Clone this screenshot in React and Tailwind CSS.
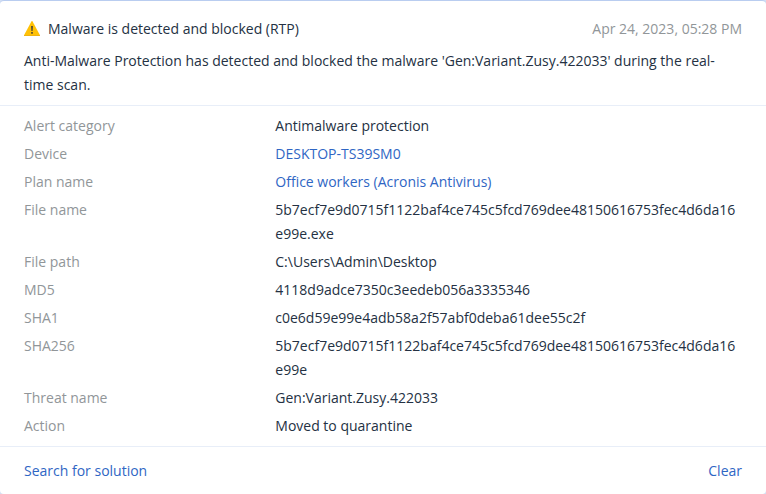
import clsx from 'clsx';

const details = [
    { label: 'Alert category', value: 'Antimalware protection' },
    { label: 'Device', value: 'DESKTOP-TS39SM0', href: '#device' },
    { label: 'Plan name', value: 'Office workers (Acronis Antivirus)', href: '#plan' },
    { label: 'File name', value: '5b7ecf7e9d0715f1122baf4ce745c5fcd769dee48150616753fec4d6da16e99e.exe', hash: true },
    { label: 'File path', value: 'C:\\Users\\Admin\\Desktop' },
    { label: 'MD5', value: '4118d9adce7350c3eedeb056a3335346', hash: true },
    { label: 'SHA1', value: 'c0e6d59e99e4adb58a2f57abf0deba61dee55c2f', hash: true },
    { label: 'SHA256', value: '5b7ecf7e9d0715f1122baf4ce745c5fcd769dee48150616753fec4d6da16e99e', hash: true },
    { label: 'Threat name', value: 'Gen:Variant.Zusy.422033' },
    { label: 'Action', value: 'Moved to quarantine' },
];

function WarningIcon() {
    return (
        <svg viewBox="0 0 16 16" className="size-4 shrink-0" aria-hidden="true">
            <path d="M7.4.4Q8-.3 8.6.4L16 14.2V15H0v-.8Z" fill="#ffc107" />
            <path d="M0 14h16v1H0Z" fill="#efb310" />
            <path d="M7.1 5h1.8l-.3 5H7.4zM7.2 11h1.6v1.8H7.2z" fill="#4a4436" />
        </svg>
    );
}

export default function App() {
    return (
        <div className="bg-[#d3dff3]">
            <article className="rounded-[4px] border-t border-[#b9cdf0] bg-white font-['Open_Sans',sans-serif] text-sm leading-6 text-[#243143]">
                <header className="px-6 pt-4 pb-2">
                    <div className="flex items-center gap-2">
                        <WarningIcon />
                        <h1>Malware is detected and blocked (RTP)</h1>
                        <time dateTime="2023-04-24T17:28" className="ml-auto text-[#919699]">
                            Apr 24, 2023, 05:28 PM
                        </time>
                    </div>
                    <p className="mt-2">
                        Anti-Malware Protection has detected and blocked the malware
                        'Gen:Variant.Zusy.422033' during the real-time scan.
                    </p>
                </header>

                <div className="border-y border-[#e8eef8] px-6 py-1.5">
                    <table className="w-full table-fixed">
                        <tbody>
                            {details.map(({ label, value, href, hash }) => (
                                <tr key={label}>
                                    <th scope="row" className="w-[35%] py-0.5 text-left align-top font-normal text-[#919699]">
                                        {label}
                                    </th>
                                    <td className={clsx('py-0.5 align-top', hash && 'break-all')}>
                                        {href ? <a href={href} className="text-[#2f66c4] hover:underline">{value}</a> : value}
                                    </td>
                                </tr>
                            ))}
                        </tbody>
                    </table>
                </div>

                <footer className="flex justify-between px-6 pt-3 pb-[11px] text-[#2f66c4]">
                    <button type="button" className="cursor-pointer hover:underline">Search for solution</button>
                    <button type="button" className="cursor-pointer hover:underline">Clear</button>
                </footer>
            </article>
        </div>
    );
}
